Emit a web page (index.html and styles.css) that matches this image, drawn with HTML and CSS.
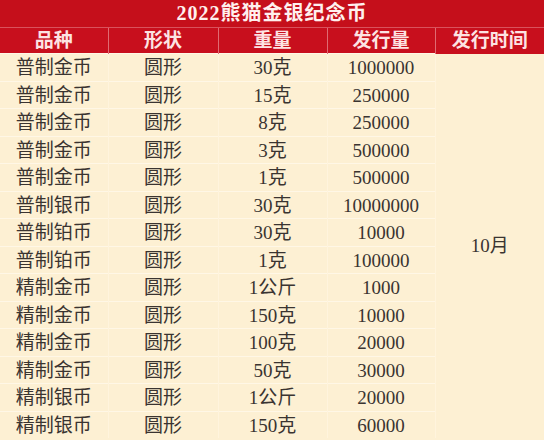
FILE: index.html
```html
<!DOCTYPE html>
<html lang="zh">
<head>
<meta charset="utf-8">
<title>2022熊猫金银纪念币</title>
<link rel="stylesheet" href="styles.css">
</head>
<body>
<table class="coins">
  <colgroup>
    <col class="c1"><col class="c2"><col class="c3"><col class="c4"><col class="c5">
  </colgroup>
  <thead>
    <tr class="title"><th colspan="5">2022熊猫金银纪念币</th></tr>
    <tr class="head"><th>品种</th><th>形状</th><th>重量</th><th>发行量</th><th>发行时间</th></tr>
  </thead>
  <tbody>
    <tr><td>普制金币</td><td>圆形</td><td>30克</td><td>1000000</td><td class="date" rowspan="14">10月</td></tr>
    <tr><td>普制金币</td><td>圆形</td><td>15克</td><td>250000</td></tr>
    <tr><td>普制金币</td><td>圆形</td><td>8克</td><td>250000</td></tr>
    <tr><td>普制金币</td><td>圆形</td><td>3克</td><td>500000</td></tr>
    <tr><td>普制金币</td><td>圆形</td><td>1克</td><td>500000</td></tr>
    <tr><td>普制银币</td><td>圆形</td><td>30克</td><td>10000000</td></tr>
    <tr><td>普制铂币</td><td>圆形</td><td>30克</td><td>10000</td></tr>
    <tr><td>普制铂币</td><td>圆形</td><td>1克</td><td>100000</td></tr>
    <tr><td>精制金币</td><td>圆形</td><td>1公斤</td><td>1000</td></tr>
    <tr><td>精制金币</td><td>圆形</td><td>150克</td><td>10000</td></tr>
    <tr><td>精制金币</td><td>圆形</td><td>100克</td><td>20000</td></tr>
    <tr><td>精制金币</td><td>圆形</td><td>50克</td><td>30000</td></tr>
    <tr><td>精制银币</td><td>圆形</td><td>1公斤</td><td>20000</td></tr>
    <tr><td>精制银币</td><td>圆形</td><td>150克</td><td>60000</td></tr>
  </tbody>
</table>
</body>
</html>
```
FILE: styles.css
```css
html, body {
  margin: 0;
  padding: 0;
  background: #fdf0d3;
}
.coins {
  width: 544px;
  border-collapse: collapse;
  table-layout: fixed;
  font-family: "Liberation Serif", "Noto Sans CJK SC", serif;
}
.c1 { width: 108px; }
.c2 { width: 110px; }
.c3 { width: 109px; }
.c4 { width: 108px; }
.c5 { width: 109px; }

.coins th, .coins td {
  padding: 0;
  text-align: center;
  white-space: nowrap;
  overflow: hidden;
}
.title th {
  height: 27px;
  background: #c50f1b;
  color: #fff0ee;
  font-size: 20px;
  font-weight: 700;
  letter-spacing: 1px;
  line-height: 27px;
  border-bottom: 1px solid #d9525c;
}
.head th {
  height: 25px;
  background: #c80f1d;
  color: #fde3e3;
  font-size: 19px;
  font-weight: 700;
  line-height: 25px;
  border-left: 1px solid #df6a72;
}
.head th:first-child { border-left: none; }

.coins td {
  height: 24.5px;
  padding-top: 2px;
  line-height: 24.5px;
  font-size: 19px;
  color: #3a3431;
  background: #fdf0d3;
  border-top: 1px solid #fff7e6;
  border-left: 1px solid #fff4dd;
}
.coins td:first-child { border-left: none; }
.coins td.date {
  vertical-align: middle;
  border-top: none;
  padding-top: 0;
}
```
